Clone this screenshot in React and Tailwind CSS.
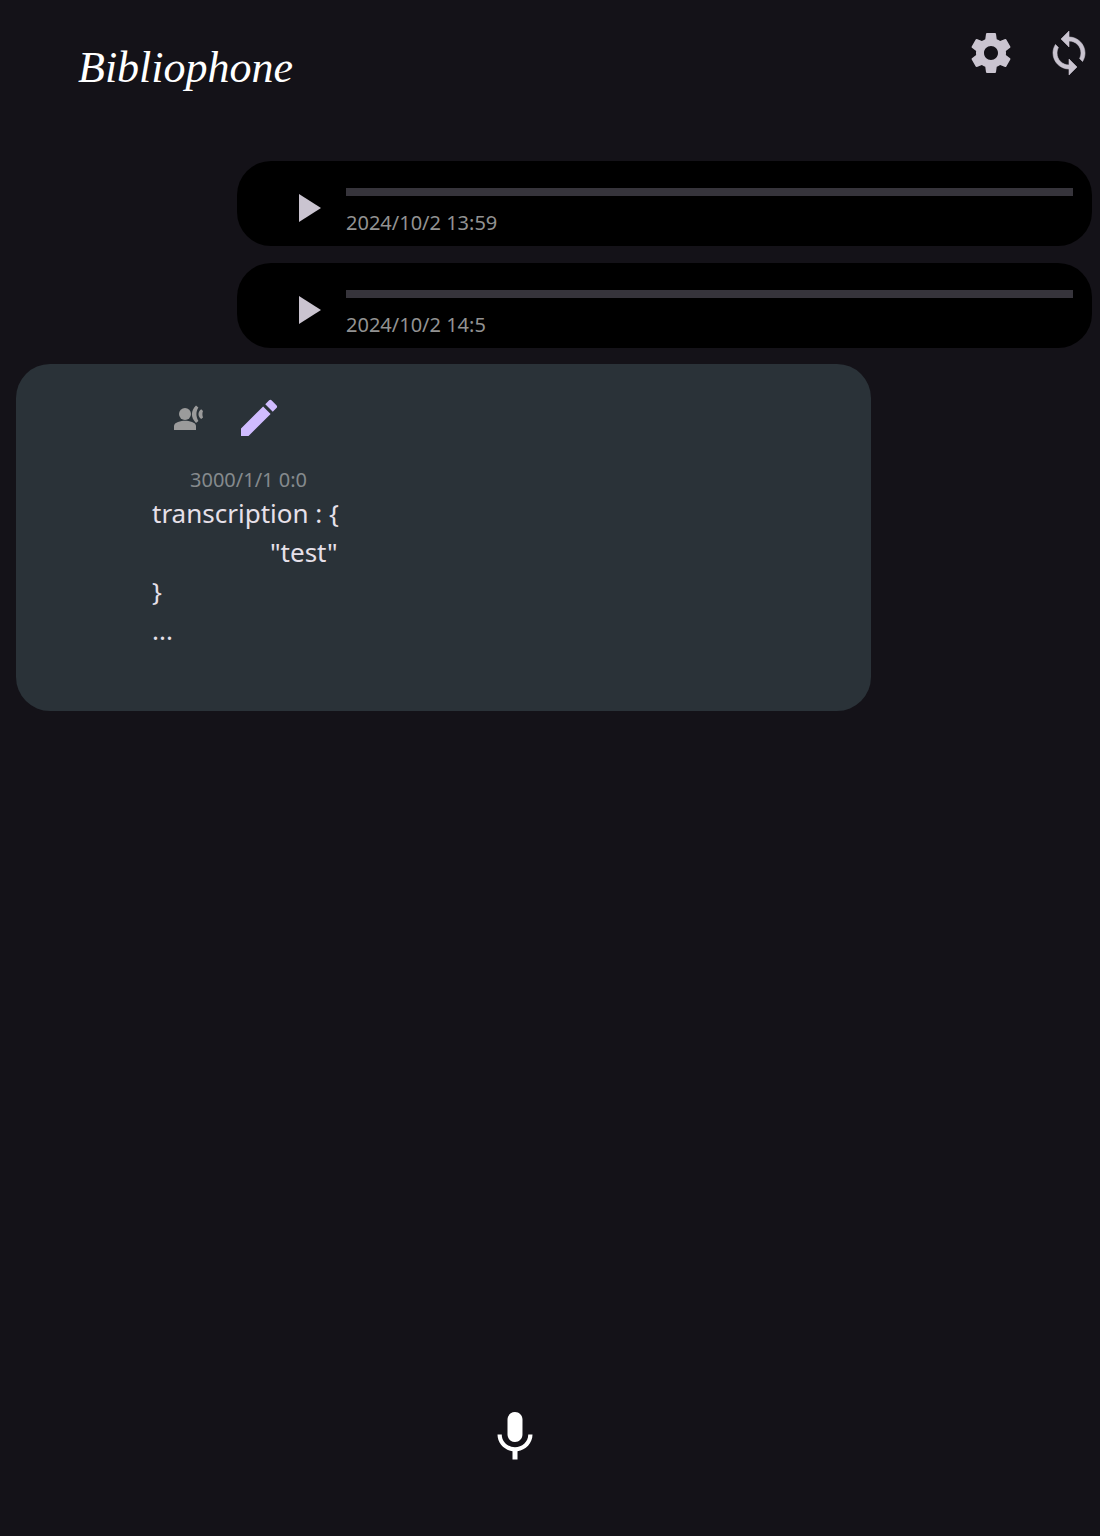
import React from "react";
import { MdPlayArrow, MdEdit, MdMic } from "react-icons/md";

const recordings = [
  { id: "rec-1", date: "2024/10/2 13:59", progress: 0 },
  { id: "rec-2", date: "2024/10/2 14:5", progress: 0 },
];

function GearIcon() {
  return (
    <svg viewBox="0 0 24 24" className="size-12" fill="currentColor" aria-hidden="true">
      <path d="M19.43 12.98c.04-.32.07-.64.07-.98s-.03-.66-.07-.98l2.11-1.65c.19-.15.24-.42.12-.64l-2-3.46c-.12-.22-.39-.3-.61-.22l-2.49 1c-.52-.4-1.08-.73-1.69-.98l-.38-2.65C14.46 2.18 14.25 2 14 2h-4c-.25 0-.46.18-.49.42l-.38 2.65c-.61.25-1.17.59-1.69.98l-2.49-1c-.23-.09-.49 0-.61.22l-2 3.46c-.13.22-.07.49.12.64l2.11 1.65c-.04.32-.07.65-.07.98s.03.66.07.98l-2.11 1.65c-.19.15-.24.42-.12.64l2 3.46c.12.22.39.3.61.22l2.49-1c.52.4 1.08.73 1.69.98l.38 2.65c.03.24.24.42.49.42h4c.25 0 .46-.18.49-.42l.38-2.65c.61-.25 1.17-.59 1.69-.98l2.49 1c.23.09.49 0 .61-.22l2-3.46c.12-.22.07-.49-.12-.64l-2.11-1.65zM12 15.5c-1.93 0-3.5-1.57-3.5-3.5s1.57-3.5 3.5-3.5 3.5 1.57 3.5 3.5-1.57 3.5-3.5 3.5z" />
    </svg>
  );
}

function SyncIcon() {
  return (
    <svg viewBox="0 0 24 24" className="size-12" fill="currentColor" stroke="currentColor" strokeWidth="0.3" aria-hidden="true">
      <path d="M12 4V1L8 5l4 4V6c3.31 0 6 2.69 6 6 0 1.01-.25 1.97-.7 2.8l1.46 1.46C19.54 15.03 20 13.57 20 12c0-4.42-3.58-8-8-8zm0 14c-3.31 0-6-2.69-6-6 0-1.01.25-1.97.7-2.8L5.24 7.74C4.46 8.97 4 10.43 4 12c0 4.42 3.58 8 8 8v3l4-4-4-4v3z" />
    </svg>
  );
}

function SpeakerIcon() {
  return (
    <svg viewBox="0 0 30 26" className="h-[26px] w-[30px]" fill="currentColor" aria-hidden="true">
      <circle cx="12" cy="9" r="6" />
      <path d="M1 25v-4c0-3.8 7-5.2 11-5.200s11 1.400 11 5.200v4z" />
      <path d="M23 0.500l2.400 2c-2.600 4-2.600 9 0 13.400l-2.400 2c-5.400-5.200-5.400-12.200 0-17.400z" />
      <path d="M28.200 4.300l1.800 1.700c-.8 2-.8 4.200 0 6.400l-1.800 1.700c-3.600-2.800-3.600-7 0-9.800z" />
    </svg>
  );
}

function Recording({ id, date, progress }) {
  return (
    <li className="ml-[237px] mr-2 flex h-[85px] items-start rounded-[34px] bg-black pl-[46px] pr-[19px]">
      <button type="button" aria-label={`Play recording ${date}`} className="mt-[23px] shrink-0 text-[#cac4d0]">
        <MdPlayArrow className="size-12" />
      </button>
      <div className="ml-[15px] flex-1 pt-[27px]">
        <div role="progressbar" aria-labelledby={id} aria-valuenow={progress} className="h-2 bg-[#36343b]" />
        <time id={id} className="mt-3 block text-[20px] leading-[30px] text-[#929292]">{date}</time>
      </div>
    </li>
  );
}

export default function App() {
  return (
    <div className="flex min-h-screen flex-col bg-[#141218] font-['Noto_Sans','Open_Sans',sans-serif]">
      <header className="flex h-[161px] items-start justify-between pl-[78px] pr-[7px]">
        <h1 className="pt-8 font-['Liberation_Serif',serif] text-[44px] leading-[72px] text-white italic">Bibliophone</h1>
        <div className="flex gap-[30px] pt-[29px] text-[#cac4d0]">
          <button type="button" aria-label="Settings"><GearIcon /></button>
          <button type="button" aria-label="Sync"><SyncIcon /></button>
        </div>
      </header>

      <main className="flex-1">
        <ul className="flex flex-col gap-[17px]">
          {recordings.map((r) => <Recording key={r.id} {...r} />)}
        </ul>
        <article className="mt-4 mr-[229px] ml-4 rounded-[34px] bg-[#2a3238] pb-[61px] pl-[136px]">
          <div className="flex items-center gap-8 pt-[30px] pl-[21px]">
            <button type="button" aria-label="Read aloud" className="text-[#9b9b9b]"><SpeakerIcon /></button>
            <button type="button" aria-label="Edit" className="text-[#d0bcff]"><MdEdit className="size-12" /></button>
          </div>
          <time className="mt-6 block pl-[38px] text-[20px] leading-7 text-[#858a8d]">3000/1/1 0:0</time>
          <pre className="font-['Noto_Sans','Open_Sans',sans-serif] text-[26px] leading-[39px] text-[#e6e0e9] [tab-size:118px]">
            {'transcription : {\n\t"test"\n}\n...'}
          </pre>
        </article>
      </main>

      <footer className="flex justify-center pr-[70px] pb-[69px]">
        <button type="button" aria-label="Record" className="text-white"><MdMic className="size-[60px]" /></button>
      </footer>
    </div>
  );
}
